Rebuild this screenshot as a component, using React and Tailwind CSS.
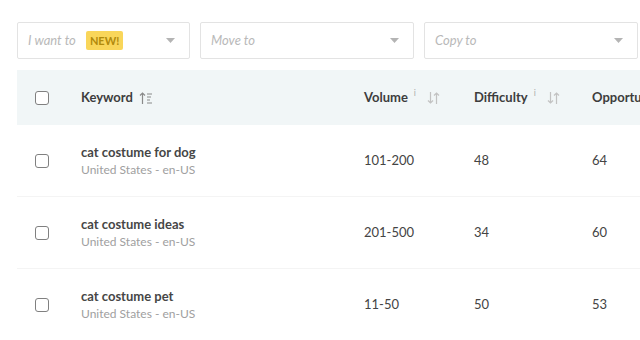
import React from "react";

const ROWS = [
    { keyword: "cat costume for dog", locale: "United States - en-US", volume: "101-200", difficulty: "48", opportunity: "64" },
    { keyword: "cat costume ideas", locale: "United States - en-US", volume: "201-500", difficulty: "34", opportunity: "60" },
    { keyword: "cat costume pet", locale: "United States - en-US", volume: "11-50", difficulty: "50", opportunity: "53" },
];

const GRID = "grid grid-cols-[64px_283px_110px_118px_200px] items-center";

const Caret = () => (
    <svg width="9" height="5" viewBox="0 0 9 5" className="text-[#b4b4b4]">
        <path d="M0 0h9L4.5 5z" fill="currentColor" />
    </svg>
);

const Checkbox = () => (
    <div className="w-[14px] h-[14px] border-[1.5px] border-[#808080] rounded-[3px] bg-white" />
);

// up arrow + lines, current sort on keyword
const SortAsc = () => (
    <svg width="14" height="14" viewBox="0 0 14 14" className="text-[#8a8a8a]">
        <path d="M3.5 13V2M1 4.5L3.5 2 6 4.5" fill="none" stroke="currentColor" strokeWidth="1.2" />
        <path d="M8 3h5M8 6h4M8 9h3M8 12h5" fill="none" stroke="currentColor" strokeWidth="1.2" />
    </svg>
);

const SortBoth = () => (
    <svg width="13" height="14" viewBox="0 0 13 14" className="text-[#c2c2c2]">
        <path d="M3.5 1v11M1 9.5L3.5 12 6 9.5" fill="none" stroke="currentColor" strokeWidth="1.2" />
        <path d="M9.5 13V2M7 4.5L9.5 2 12 4.5" fill="none" stroke="currentColor" strokeWidth="1.2" />
    </svg>
);

const Select = ({ width, children }) => (
    <div className={`${width} h-[37px] border border-[#e3e3e3] rounded-[2px] bg-white flex items-center justify-between pl-[10px] pr-[14px]`}>
        <div className="flex items-center gap-[10px]">{children}</div>
        <Caret />
    </div>
);

const Placeholder = ({ children }) => (
    <span className="italic text-[13px] text-[#b9b9b9]">{children}</span>
);

const App = () => {
    return (
        <div
            className="w-[640px] h-[340px] overflow-hidden bg-white text-[#3b3b3b]"
            style={{ fontFamily: 'Lato, "Open Sans", sans-serif' }}
        >
            {/* Action selects */}
            <div className="flex gap-[10px] pl-[17px] pt-[22px]">
                <Select width="w-[173px]">
                    <Placeholder>I want to</Placeholder>
                    <span className="bg-[#f9d65a] text-[#b18a0c] text-[11px] font-bold rounded-[2px] px-[4px] leading-[19px]">NEW!</span>
                </Select>
                <Select width="w-[214px]">
                    <Placeholder>Move to</Placeholder>
                </Select>
                <Select width="w-[214px]">
                    <Placeholder>Copy to</Placeholder>
                </Select>
            </div>

            {/* Table */}
            <div className="ml-[17px] mt-[11px] w-[775px]">
                <div className={`${GRID} h-[55px] bg-[#f1f6f7] text-[13px] font-bold text-[#3d3d3d]`}>
                    <div className="pl-[18px]"><Checkbox /></div>
                    <div className="flex items-center gap-[6px]">
                        <span>Keyword</span>
                        <SortAsc />
                    </div>
                    <div className="flex items-center">
                        <span>Volume</span>
                        <span className="text-[9px] font-normal text-[#b0b0b0] ml-[6px] -mt-[10px]">i</span>
                        <span className="ml-[11px]"><SortBoth /></span>
                    </div>
                    <div className="flex items-center">
                        <span>Difficulty</span>
                        <span className="text-[9px] font-normal text-[#b0b0b0] ml-[6px] -mt-[10px]">i</span>
                        <span className="ml-[11px]"><SortBoth /></span>
                    </div>
                    <div>Opportunity</div>
                </div>

                {ROWS.map((row, i) => (
                    <div
                        key={row.keyword}
                        className={`${GRID} h-[72px] ${i < ROWS.length - 1 ? "border-b border-[#f4f4f4]" : ""} text-[13px]`}
                    >
                        <div className="pl-[18px]"><Checkbox /></div>
                        <div className="flex flex-col leading-[18px]">
                            <span className="font-bold text-[#464646]">{row.keyword}</span>
                            <span className="text-[12px] text-[#a0a0a0]">{row.locale}</span>
                        </div>
                        <div className="text-[#444]">{row.volume}</div>
                        <div className="text-[#444]">{row.difficulty}</div>
                        <div className="text-[#444]">{row.opportunity}</div>
                    </div>
                ))}
            </div>
        </div>
    );
};

export default App;
